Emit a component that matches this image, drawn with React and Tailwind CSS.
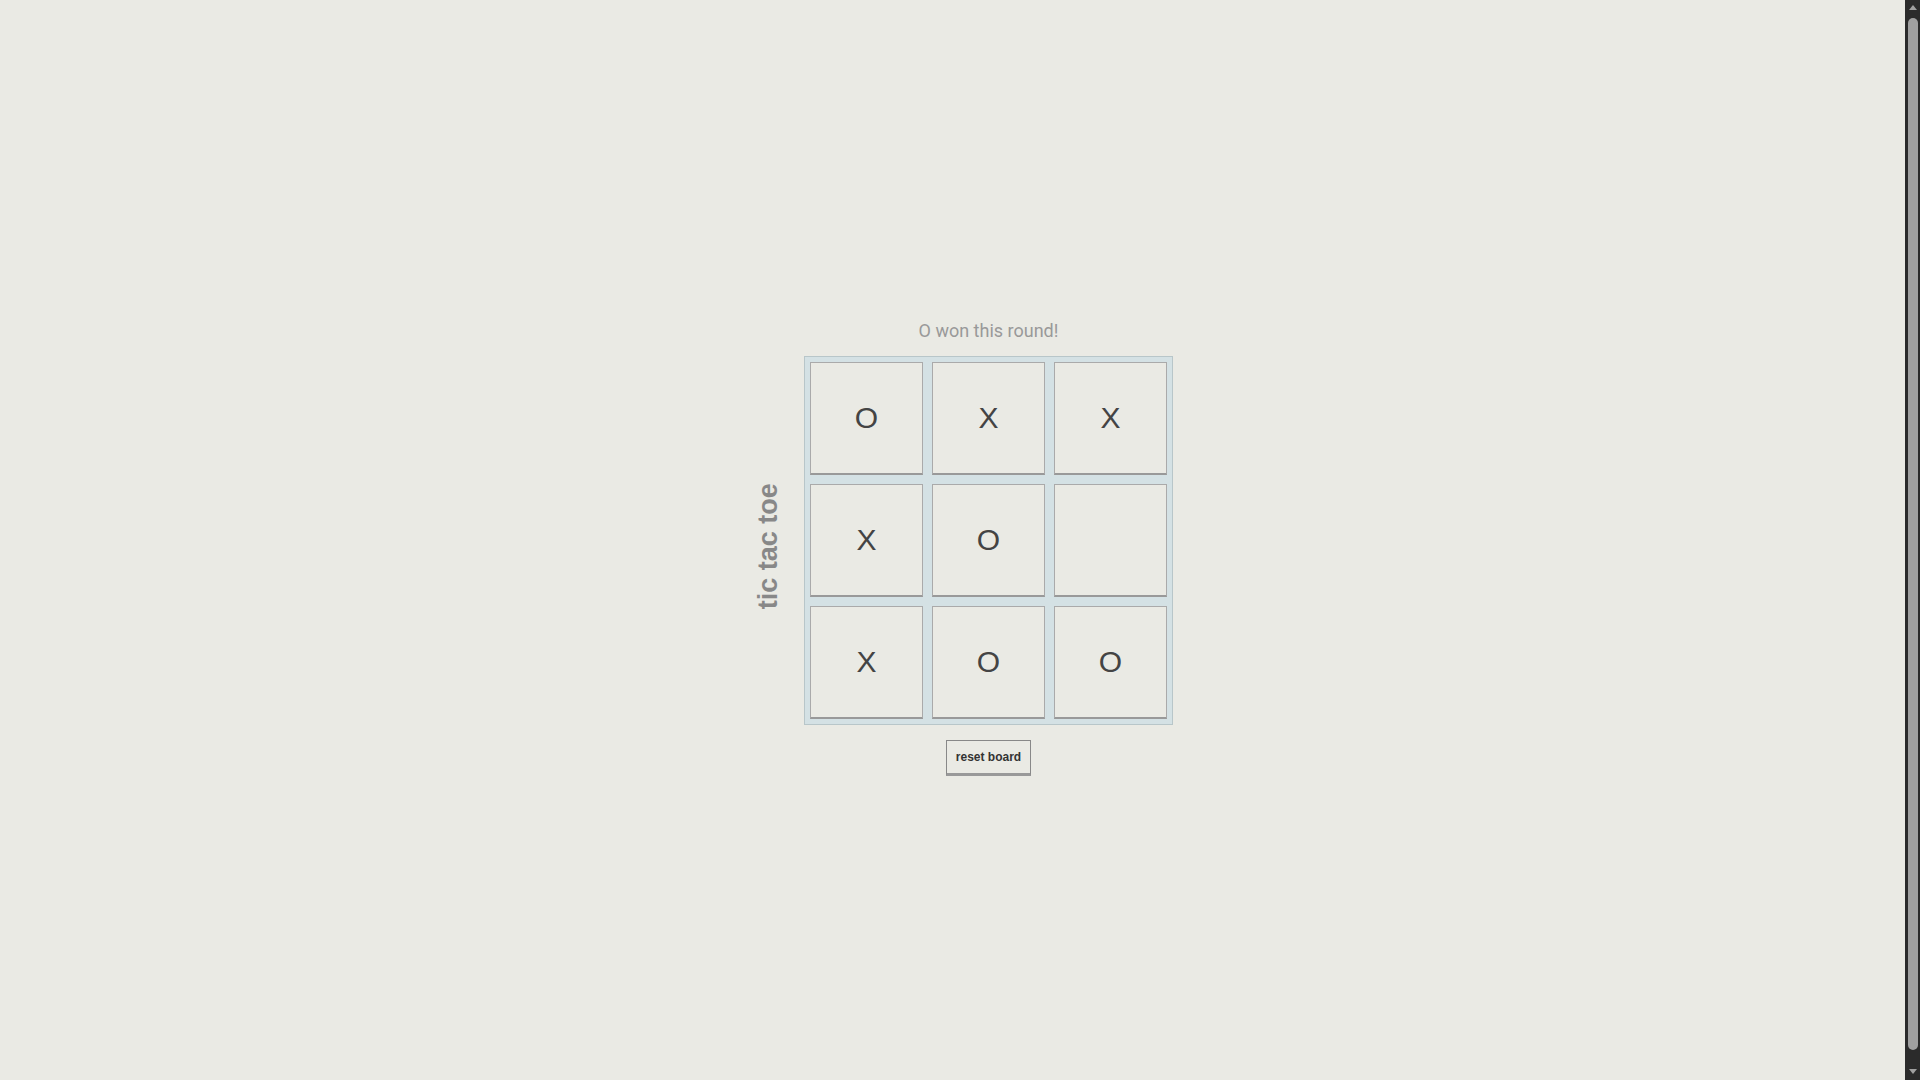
const board = ['O', 'X', 'X', 'X', 'O', '', 'X', 'O', 'O']

const Cell = ({ value }) => {
  return (
    <div className="w-[113px] h-[113px] flex items-center justify-center bg-[#eaeae4] border border-[#aaaaaa] border-b-2 border-b-[#999999] text-[30px] text-[#444444] font-['Liberation_Sans',Arial,sans-serif]">
      {value}
    </div>
  )
}

const App = () => {
  return (
    <div className="min-h-[1092px] bg-[#eaeae4] flex items-center justify-center pr-[15px]">
      <div className="flex items-center">
        {/* Title */}
        <div className="w-[72px] flex justify-center">
          <div className="-rotate-90 whitespace-nowrap text-[27px] font-bold text-[#888888] font-['Liberation_Sans',Arial,sans-serif]">
            tic tac toe
          </div>
        </div>

        {/* Game */}
        <div className="flex flex-col items-center">
          <p className="mb-[12px] text-[18px] leading-[27px] text-[#999999] font-['Roboto',sans-serif]">
            O won this round!
          </p>
          <div className="grid grid-cols-3 gap-[9px] p-[5px] bg-[#d4e1e4] border border-[#b8c6c9]">
            {board.map((value, i) => (
              <Cell key={i} value={value} />
            ))}
          </div>
          <button className="mt-[15px] w-[85px] h-[36px] bg-[#eaeae4] border border-[#888888] border-b-[3px] border-b-[#999999] text-[12px] font-bold text-[#333333] font-['Liberation_Sans',Arial,sans-serif]">
            reset board
          </button>
        </div>
      </div>

      {/* Scrollbar */}
      <div className="fixed right-0 top-0 h-screen w-[15px] bg-[#2b2b2b] flex flex-col items-center">
        <div className="mt-[5px] w-0 h-0 border-l-[4px] border-r-[4px] border-b-[5px] border-l-transparent border-r-transparent border-b-[#a0a0a0]" />
        <div className="mt-[8px] w-[10px] flex-1 rounded-full bg-[#a0a0a0]" />
        <div className="mt-[19px] mb-[6px] w-0 h-0 border-l-[4px] border-r-[4px] border-t-[5px] border-l-transparent border-r-transparent border-t-[#a0a0a0]" />
      </div>
    </div>
  )
}

export default App
